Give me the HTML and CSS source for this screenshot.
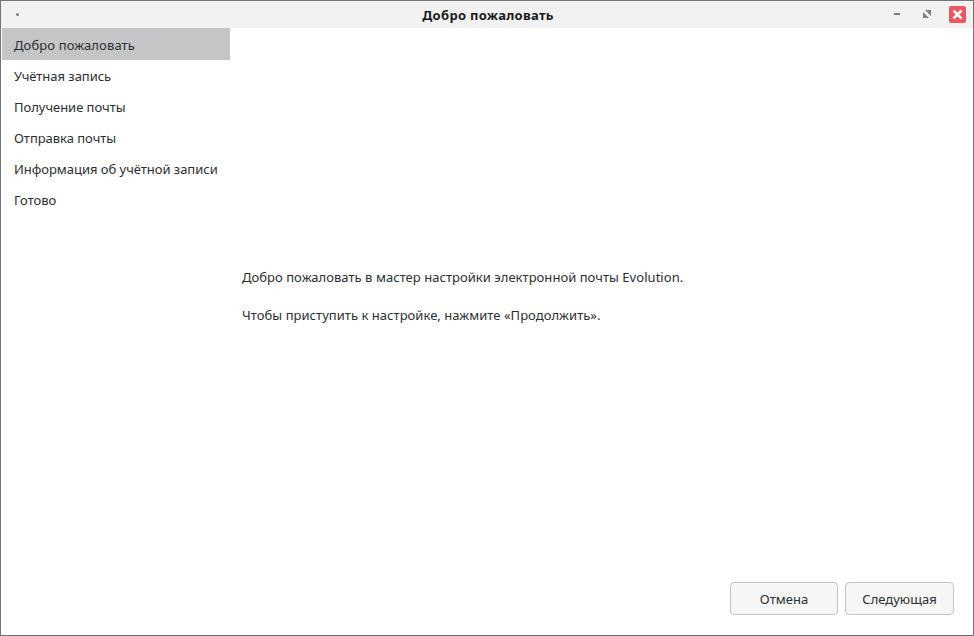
FILE: index.html
```html
<!DOCTYPE html>
<html lang="ru">
<head>
<meta charset="utf-8">
<title>Добро пожаловать</title>
<link rel="stylesheet" href="styles.css">
</head>
<body>
<div class="window">
  <header class="titlebar">
    <span class="menu-dot"></span>
    <h1 class="title">Добро пожаловать</h1>
    <div class="controls">
      <svg class="ctl" width="6" height="3" viewBox="0 0 6 3"><rect width="6" height="2" fill="#7f7f7f"/></svg>
      <svg class="ctl" width="8" height="9" viewBox="0 0 8 9"><path d="M8 0v6L2 0zM0 8V2l6 6z" fill="#7f7f7f"/></svg>
      <svg class="ctl" width="17" height="17" viewBox="0 0 17 17"><rect width="17" height="17" rx="2.5" fill="#f0545c"/><path d="M4.5 4.5l8 8M12.5 4.5l-8 8" stroke="#fff" stroke-width="2.6" fill="none"/></svg>
    </div>
  </header>
  <div class="body">
    <nav class="steps">
      <div class="step active">Добро пожаловать</div>
      <div class="step">Учётная запись</div>
      <div class="step">Получение почты</div>
      <div class="step">Отправка почты</div>
      <div class="step">Информация об учётной записи</div>
      <div class="step">Готово</div>
    </nav>
    <main class="content">
      <div class="page">
        <p>Добро пожаловать в мастер настройки электронной почты Evolution.</p>
        <p>Чтобы приступить к настройке, нажмите «Продолжить».</p>
      </div>
      <div class="actions">
        <button class="btn cancel">Отмена</button>
        <button class="btn next">Следующая</button>
      </div>
    </main>
  </div>
</div>
</body>
</html>
```
FILE: styles.css
```css
* { box-sizing: border-box; }
html, body { margin: 0; height: 100%; }
body { font-family: "Noto Sans", "Open Sans", sans-serif; font-size: 13px; color: #2a2f31; background: #fff; overflow: hidden; }
.window { width: 974px; height: 636px; border: 1px solid #747474; border-bottom-color: #6e6e6e; display: flex; flex-direction: column; background: #fff; }
.titlebar { height: 27px; flex: none; background: #f2f2f2; display: flex; align-items: center; justify-content: center; position: relative; }
.menu-dot { position: absolute; left: 15px; top: 12px; width: 3px; height: 3px; border-radius: 50%; background: #808080; }
.title { margin: 0; padding-left: 2px; font-size: 13px; font-weight: 700; color: #1c1c1c; letter-spacing: 0.3px; }
.controls { position: absolute; right: 7px; top: 5px; display: flex; align-items: center; gap: 0; }
.ctl { display: block; }
.ctl:nth-child(1) { margin-right: 23px; }
.ctl:nth-child(2) { margin-right: 18px; }
.body { flex: 1; display: flex; min-height: 0; padding-left: 1px; }
.steps { width: 228px; flex: none; }
.step { height: 31px; padding: 0 12px; line-height: 33px; white-space: nowrap; letter-spacing: -0.03px; }
.step.active { height: 32px; line-height: 34px; background: #c4c5c6; letter-spacing: 0.12px; }
.content { flex: 1; display: flex; flex-direction: column; padding: 0 19px 20px 12px; }
.page { flex: 1; display: flex; flex-direction: column; justify-content: center; gap: 20px; padding-bottom: 18px; letter-spacing: 0.04px; }
.page p { margin: 0; line-height: 18px; }
.actions { display: flex; justify-content: flex-end; gap: 7px; }
.btn { height: 33px; border: 1px solid #c4c4c4; border-radius: 4px; background: #f6f6f6; font: inherit; color: inherit; padding: 0; }
.cancel { width: 108px; }
.next { width: 109px; }
```
